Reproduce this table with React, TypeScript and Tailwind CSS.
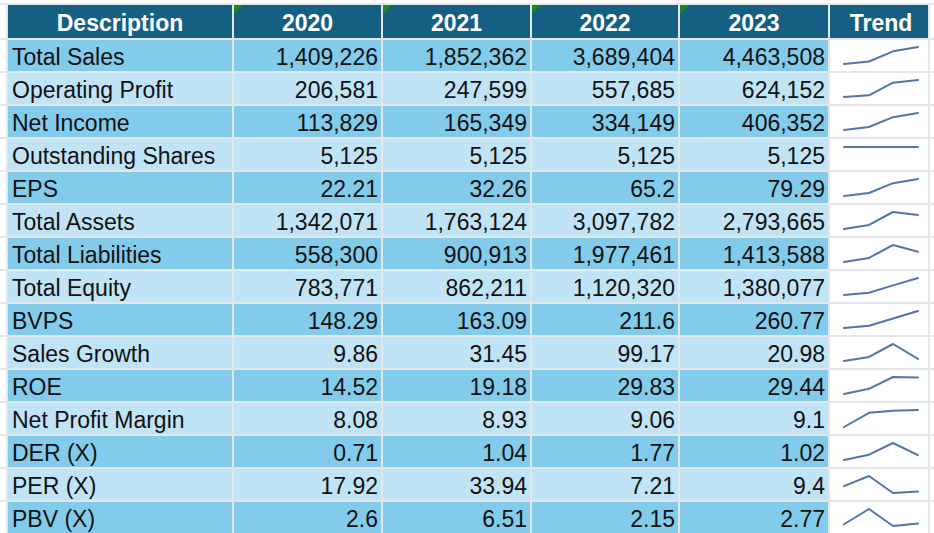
import React from "react";

type Row = {
  label: string;
  values: string[];
};

const rows: Row[] = [
  { label: "Total Sales", values: ["1,409,226", "1,852,362", "3,689,404", "4,463,508"] },
  { label: "Operating Profit", values: ["206,581", "247,599", "557,685", "624,152"] },
  { label: "Net Income", values: ["113,829", "165,349", "334,149", "406,352"] },
  { label: "Outstanding Shares", values: ["5,125", "5,125", "5,125", "5,125"] },
  { label: "EPS", values: ["22.21", "32.26", "65.2", "79.29"] },
  { label: "Total Assets", values: ["1,342,071", "1,763,124", "3,097,782", "2,793,665"] },
  { label: "Total Liabilities", values: ["558,300", "900,913", "1,977,461", "1,413,588"] },
  { label: "Total Equity", values: ["783,771", "862,211", "1,120,320", "1,380,077"] },
  { label: "BVPS", values: ["148.29", "163.09", "211.6", "260.77"] },
  { label: "Sales Growth", values: ["9.86", "31.45", "99.17", "20.98"] },
  { label: "ROE", values: ["14.52", "19.18", "29.83", "29.44"] },
  { label: "Net Profit Margin", values: ["8.08", "8.93", "9.06", "9.1"] },
  { label: "DER (X)", values: ["0.71", "1.04", "1.77", "1.02"] },
  { label: "PER (X)", values: ["17.92", "33.94", "7.21", "9.4"] },
  { label: "PBV (X)", values: ["2.6", "6.51", "2.15", "2.77"] },
];

const years = ["2020", "2021", "2022", "2023"];

const Sparkline = ({ values }: { values: string[] }) => {
  const nums = values.map((v) => parseFloat(v.replace(/,/g, "")));
  const min = Math.min(...nums);
  const max = Math.max(...nums);
  const xs = [14, 39, 63, 88];
  const points = nums
    .map((n, i) => {
      const y = max === min ? 8 : 24 - ((n - min) / (max - min)) * 17;
      return `${xs[i]},${y}`;
    })
    .join(" ");
  return (
    <svg width="98" height="31" viewBox="0 0 98 31">
      <polyline
        points={points}
        fill="none"
        stroke="#5276ab"
        strokeWidth="2"
        strokeLinejoin="round"
        strokeLinecap="round"
      />
    </svg>
  );
};

const App = () => {
  return (
    <div
      className="w-[934px] h-[533px] overflow-hidden bg-white text-[#111]"
      style={{ fontFamily: '"Liberation Sans", Arial, sans-serif' }}
    >
      <div className="mt-[3px] pt-[2px] bg-[#e3e7ea] grid grid-cols-[6px_224px_147px_147px_146px_148px_98px_20px] grid-rows-[33px] auto-rows-[31px] gap-[2px]">
        <div className="bg-white" />
        <div className="bg-[#156082] text-white font-bold text-[23px] flex items-center justify-center pt-[3px]">
          Description
        </div>
        {years.map((y) => (
          <div
            key={y}
            className="relative bg-[#156082] text-white font-bold text-[23px] flex items-center justify-center pt-[3px]"
          >
            <span className="absolute top-0 left-0 w-0 h-0 border-t-[9px] border-r-[9px] border-t-[#1a8a1a] border-r-transparent" />
            {y}
          </div>
        ))}
        <div className="bg-[#156082] text-white font-bold text-[23px] flex items-center justify-center pl-[4px] pt-[3px]">
          Trend
        </div>
        <div className="bg-white" />

        {rows.map((r, i) => {
          const bg = i % 2 === 0 ? "bg-[#83cbeb]" : "bg-[#c0e4f5]";
          return (
            <React.Fragment key={r.label}>
              <div className="bg-white" />
              <div className={`${bg} text-[23px] flex items-center pl-[4px] pt-[4px] whitespace-nowrap`}>
                {r.label}
              </div>
              {r.values.map((v, j) => (
                <div
                  key={j}
                  className={`${bg} text-[23px] flex items-center justify-end pr-[3px] pt-[4px]`}
                >
                  {v}
                </div>
              ))}
              <div className="bg-white flex items-center">
                <Sparkline values={r.values} />
              </div>
              <div className="bg-white" />
            </React.Fragment>
          );
        })}
      </div>
    </div>
  );
};

export default App;
